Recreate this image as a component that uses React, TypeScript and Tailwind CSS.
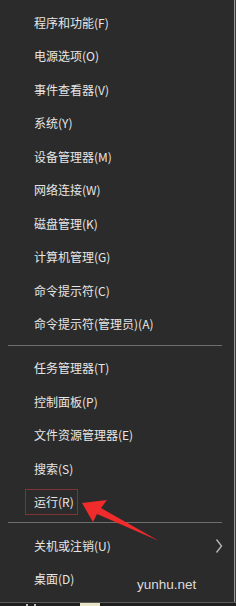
const FONT = { fontFamily: '"Noto Sans CJK SC", "Noto Sans", sans-serif' };

type Item = { label: string; sub?: boolean; boxed?: boolean };

const groupA: Item[] = [
  { label: "程序和功能(F)" },
  { label: "电源选项(O)" },
  { label: "事件查看器(V)" },
  { label: "系统(Y)" },
  { label: "设备管理器(M)" },
  { label: "网络连接(W)" },
  { label: "磁盘管理(K)" },
  { label: "计算机管理(G)" },
  { label: "命令提示符(C)" },
  { label: "命令提示符(管理员)(A)" },
];

const groupB: Item[] = [
  { label: "任务管理器(T)" },
  { label: "控制面板(P)" },
  { label: "文件资源管理器(E)" },
  { label: "搜索(S)" },
  { label: "运行(R)", boxed: true },
];

const groupC: Item[] = [{ label: "关机或注销(U)", sub: true }, { label: "桌面(D)" }];

function Row({ item }: { item: Item }) {
  return (
    <div className="flex h-[33.45px] items-center pl-[34px] pr-[12px]">
      {item.boxed ? (
        <span className="-ml-[9px] flex h-[26px] items-center border border-[#7e3434] pl-[8px] pr-[3px]">
          {item.label}
        </span>
      ) : (
        <span>{item.label}</span>
      )}
      {item.sub && (
        <svg className="ml-auto -mr-[1px]" width="8" height="16" viewBox="0 0 8 16" aria-hidden>
          <polyline points="1.5,1.5 6.5,8 1.5,14.5" fill="none" stroke="#b4b4b4" strokeWidth="1.4" />
        </svg>
      )}
    </div>
  );
}

function Sep() {
  return <div className="ml-[8px] mr-[12px] h-px bg-[#6e6e6e]" />;
}

export default function App() {
  return (
    <div className="relative flex h-[606px] w-[236px] flex-col bg-[#2b2b2b] text-[12px] text-[#e6e6e6]" style={FONT}>
      <div className="flex flex-1">
        <div className="flex flex-1 flex-col pt-[6.3px]">
          {groupA.map((it) => (
            <Row key={it.label} item={it} />
          ))}
          <div className="mt-[4px] mb-[6px]">
            <Sep />
          </div>
          {groupB.map((it) => (
            <Row key={it.label} item={it} />
          ))}
          <div className="mt-[3px] mb-[6px]">
            <Sep />
          </div>
          {groupC.map((it) => (
            <Row key={it.label} item={it} />
          ))}
        </div>
        <div className="w-px bg-[#9a9a9a]" />
        <div className="w-px bg-[#3a3a3a]" />
      </div>
      <div className="flex h-[4px] items-end border-t border-[#5a5a5a] bg-[#1e1e1e]">
        <div className="ml-[26px] h-[2px] w-[2px] bg-[#bdbdbd]" />
        <div className="ml-[6px] h-[2px] w-[2px] bg-[#bdbdbd]" />
        <div className="ml-[44px] h-[3px] w-[20px] bg-[#e8e4c8]" />
      </div>

      {/* red arrow pointing at 运行 */}
      <svg className="pointer-events-none absolute left-0 top-0" width="236" height="606" aria-hidden>
        <polygon
          points="82,503 107,500 101,508 159,541 97,514 93,522"
          fill="#ef2b2b"
        />
      </svg>

      {/* watermark */}
      <span
        className="absolute left-[137px] top-[575px] text-[13.5px] leading-[20px] text-[#dcdcdc]"
        style={{ fontFamily: '"Liberation Sans", Arial, sans-serif' }}
      >
        yunhu.net
      </span>
    </div>
  );
}
